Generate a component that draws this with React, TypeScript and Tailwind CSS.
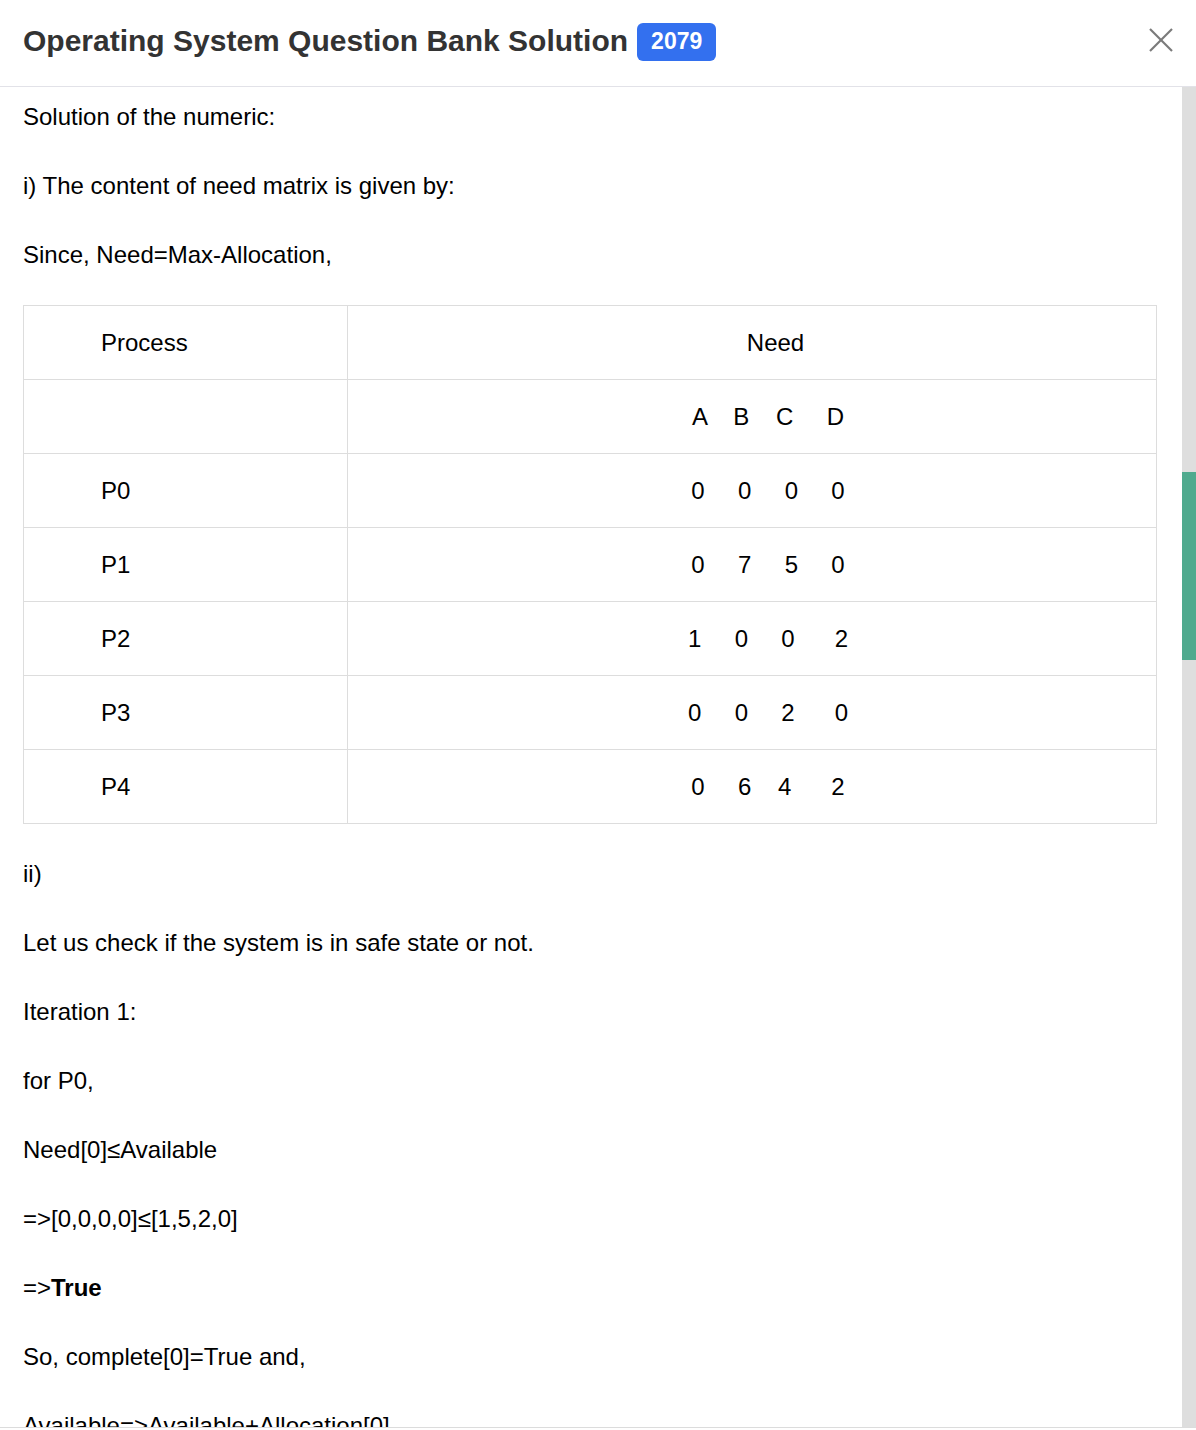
import React from "react";

type Row = { name: string; need: string };

const rows: Row[] = [
  { name: "P0", need: "0     0     0     0" },
  { name: "P1", need: "0     7     5     0" },
  { name: "P2", need: "1     0     0      2" },
  { name: "P3", need: "0     0     2      0" },
  { name: "P4", need: "0     6    4      2" },
];

const lines: React.ReactNode[] = [
  "ii)",
  "Let us check if the system is in safe state or not.",
  "Iteration 1:",
  "for P0,",
  "Need[0]≤Available",
  "=>[0,0,0,0]≤[1,5,2,0]",
  <>
    =&gt;<b>True</b>
  </>,
  "So, complete[0]=True and,",
  "Available=>Available+Allocation[0]",
];

const App: React.FC = () => {
  return (
    <div className="w-[1196px] h-[1430px] flex flex-col bg-white overflow-hidden font-['Liberation_Sans',Arial,sans-serif]">
      <div className="h-[87px] shrink-0 flex items-center justify-between pl-[23px] pr-[23px] pb-[6px] border-b border-[#e2e2e8]">
        <div className="flex items-center gap-[9px]">
          <h1 className="text-[30px] font-bold text-[#333]">
            Operating System Question Bank Solution
          </h1>
          <span className="h-[38px] mt-[3px] px-[14px] flex items-center rounded-[6px] bg-[#3370ef] text-white text-[23px] font-bold">
            2079
          </span>
        </div>
        <button className="w-[24px] h-[24px]">
          <svg viewBox="0 0 24 24" width="24" height="24" fill="none" stroke="#7a7a7a" strokeWidth="2.2">
            <line x1="1" y1="1" x2="23" y2="23" />
            <line x1="23" y1="1" x2="1" y2="23" />
          </svg>
        </button>
      </div>

      <div className="h-[1341px] shrink-0 flex border-b border-[#dcdcdc]">
        <div className="flex-1 overflow-hidden pl-[23px] pr-[25px] pt-[12px] text-[24px] text-black">
          <p className="leading-[36px] mb-[33px]">Solution of the numeric:</p>
          <p className="leading-[36px] mb-[33px]">i) The content of need matrix is given by:</p>
          <p className="leading-[36px] mb-[32px]">Since, Need=Max-Allocation,</p>

          <table className="w-full border-collapse mb-[32px]">
            <tbody>
              <tr>
                <td className="w-[324px] h-[74px] border border-[#dddddd] pl-[77px]">Process</td>
                <td className="h-[74px] border border-[#dddddd] text-center pl-[47px]">Need</td>
              </tr>
              <tr>
                <td className="h-[74px] border border-[#dddddd]"></td>
                <td className="h-[74px] border border-[#dddddd] text-center pl-[32px] whitespace-pre">
                  {"A    B    C     D"}
                </td>
              </tr>
              {rows.map((r) => (
                <tr key={r.name}>
                  <td className="h-[74px] border border-[#dddddd] pl-[77px]">{r.name}</td>
                  <td className="h-[74px] border border-[#dddddd] text-center pl-[32px] whitespace-pre">
                    {r.need}
                  </td>
                </tr>
              ))}
            </tbody>
          </table>

          {lines.map((l, i) => (
            <p key={i} className="leading-[36px] mb-[33px]">
              {l}
            </p>
          ))}
        </div>
        <div className="w-[14px] shrink-0 bg-[#dedede]">
          <div className="mt-[385px] h-[188px] bg-[#4faa8e]" />
        </div>
      </div>
    </div>
  );
};

export default App;
